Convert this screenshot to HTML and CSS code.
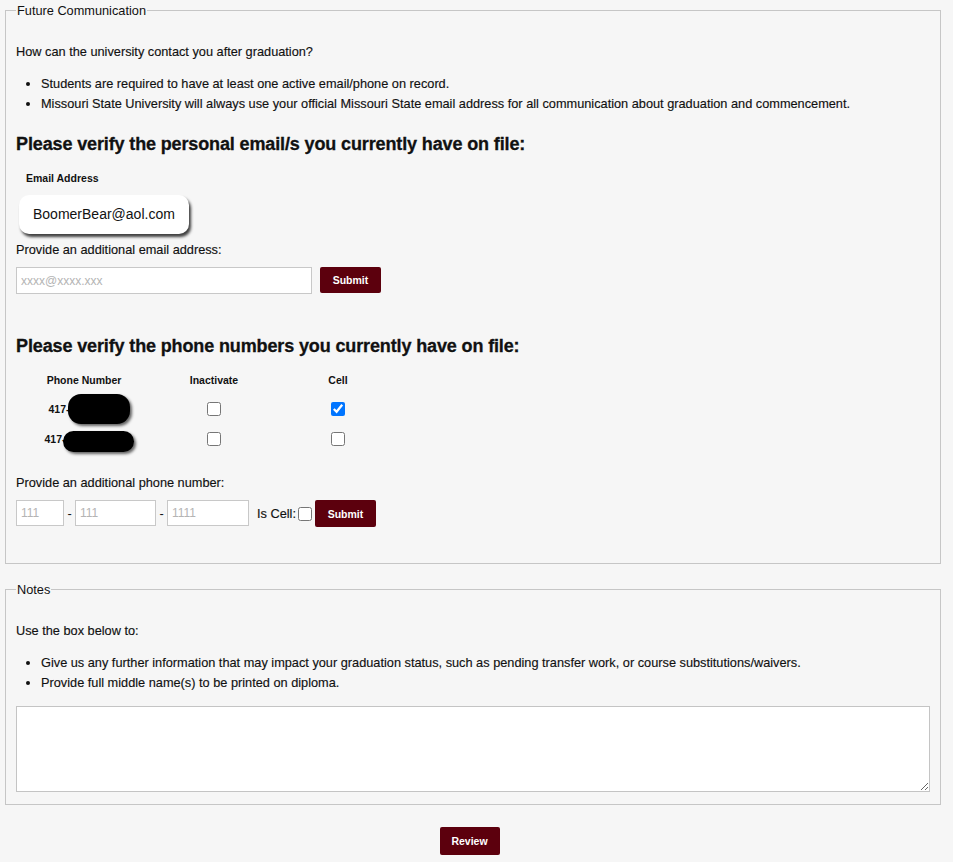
FILE: index.html
```html
<!DOCTYPE html>
<html lang="en">
<head>
<meta charset="utf-8">
<title>Future Communication</title>
<link rel="stylesheet" href="styles.css">
</head>
<body>
<div class="page">
  <fieldset class="box box-comm">
    <legend>Future Communication</legend>
    <p class="intro">How can the university contact you after graduation?</p>
    <ul class="bullets">
      <li>Students are required to have at least one active email/phone on record.</li>
      <li>Missouri State University will always use your official Missouri State email address for all communication about graduation and commencement.</li>
    </ul>

    <h2 class="section-title">Please verify the personal email/s you currently have on file:</h2>
    <div class="col-label">Email Address</div>
    <div class="email-pill">BoomerBear@aol.com</div>

    <label class="field-label" for="newEmail">Provide an additional email address:</label>
    <div class="inline-form">
      <input id="newEmail" class="text-input email-input" type="text" placeholder="xxxx@xxxx.xxx">
      <button class="btn btn-submit" type="button">Submit</button>
    </div>

    <h2 class="section-title phone-title">Please verify the phone numbers you currently have on file:</h2>
    <div class="phone-table">
      <div class="th">Phone Number</div>
      <div class="th">Inactivate</div>
      <div class="th">Cell</div>

      <div class="td td-phone"><span class="num">417-</span><span class="redact redact-1"></span></div>
      <div class="td"><input class="check" type="checkbox"></div>
      <div class="td"><input class="check" type="checkbox" checked></div>

      <div class="td td-phone"><span class="num">417-</span><span class="redact redact-2"></span></div>
      <div class="td"><input class="check" type="checkbox"></div>
      <div class="td"><input class="check" type="checkbox"></div>
    </div>

    <label class="field-label phone-label" for="area">Provide an additional phone number:</label>
    <div class="phone-form">
      <input id="area" class="text-input ph-area" type="text" placeholder="111">
      <span class="dash">-</span>
      <input class="text-input ph-mid" type="text" placeholder="111">
      <span class="dash">-</span>
      <input class="text-input ph-last" type="text" placeholder="1111">
      <span class="is-cell">Is Cell:</span>
      <input class="check cell-check" type="checkbox">
      <button class="btn btn-submit btn-phone" type="button">Submit</button>
    </div>
  </fieldset>

  <fieldset class="box box-notes">
    <legend>Notes</legend>
    <p class="intro">Use the box below to:</p>
    <ul class="bullets">
      <li>Give us any further information that may impact your graduation status, such as pending transfer work, or course substitutions/waivers.</li>
      <li>Provide full middle name(s) to be printed on diploma.</li>
    </ul>
    <textarea class="notes-area"></textarea>
  </fieldset>

  <div class="actions">
    <button class="btn btn-review" type="button">Review</button>
  </div>
</div>
</body>
</html>
```

FILE: styles.css
```css
html, body {
  margin: 0;
  padding: 0;
  background: #f6f6f6;
}

body {
  font-family: "Liberation Sans", Arial, sans-serif;
  font-size: 12.75px;
  color: #111;
}

.page {
  padding: 0 0 0 5px;
  width: 936px;
}

.box {
  box-sizing: border-box;
  width: 936px;
  margin: 3px 0 0;
  padding: 0 10px 36px;
  border: 1px solid #c6c6c6;
  min-width: 0;
}

.box legend {
  padding: 0 1px;
  font-size: 12.75px;
  line-height: 15px;
  color: #111;
}

.box-notes {
  margin-top: 18px;
  padding-bottom: 12px;
}

.intro {
  margin: 26px 0 0;
  line-height: 15px;
  -webkit-text-stroke: 0.15px #111;
}

.bullets {
  margin: 15px 0 0;
  padding-left: 25px;
  -webkit-text-stroke: 0.15px #111;
}

.bullets li {
  line-height: 20px;
}

.section-title {
  margin: 19px 0 0;
  font-size: 18px;
  line-height: 22px;
  font-weight: bold;
  letter-spacing: -0.13px;
  -webkit-text-stroke: 0.3px #111;
  color: #111;
}

.phone-title {
  margin-top: 41px;
}

.col-label {
  margin-top: 17px;
  padding-left: 10px;
  font-size: 10.5px;
  line-height: 13px;
  font-weight: bold;
}

.email-pill {
  box-sizing: border-box;
  width: 170px;
  height: 39px;
  margin: 10px 0 0 3px;
  padding-left: 14px;
  line-height: 39px;
  font-size: 14px;
  color: #111;
  background: #fff;
  border-radius: 10px;
  box-shadow: 2px 3px 3px rgba(0, 0, 0, 0.75);
}

.field-label {
  display: block;
  margin-top: 8px;
  line-height: 15px;
  -webkit-text-stroke: 0.15px #111;
}

.phone-label {
  margin-top: 21px;
}

.inline-form {
  display: flex;
  align-items: flex-start;
  gap: 8px;
  margin-top: 10px;
}

.text-input {
  box-sizing: border-box;
  height: 27px;
  margin: 0;
  padding: 0 4px;
  border: 1px solid #c8c8c8;
  border-radius: 0;
  background: #fff;
  font-family: "Liberation Sans", Arial, sans-serif;
  font-size: 12px;
  color: #111;
  outline: none;
}

.text-input::placeholder {
  color: #b4b4b4;
}

.email-input {
  width: 296px;
}

.btn {
  box-sizing: border-box;
  margin: 0;
  padding: 0;
  border: none;
  border-radius: 2px;
  background: #5c000d;
  color: #fff;
  font-family: "Liberation Sans", Arial, sans-serif;
  font-size: 10.5px;
  font-weight: bold;
  cursor: pointer;
}

.btn-submit {
  width: 61px;
  height: 26px;
}

.phone-table {
  display: grid;
  grid-template-columns: 136px 124px 124px;
  grid-template-rows: 20px 30px 30px;
  margin-top: 17px;
}

.th {
  font-size: 10.5px;
  line-height: 13px;
  font-weight: bold;
  text-align: center;
}

.td {
  display: flex;
  align-items: center;
  justify-content: center;
}

.td-phone {
  padding-left: 10px;
  font-size: 10.5px;
  font-weight: bold;
}

.num {
  line-height: 13px;
}

.redact {
  display: inline-block;
  background: #000;
  box-shadow: 2px 2px 3px rgba(0, 0, 0, 0.6);
  filter: blur(0.4px);
}

.redact-1 {
  width: 62px;
  height: 30px;
  margin-left: -2px;
  border-radius: 13px;
}

.redact-2 {
  width: 71px;
  height: 21px;
  margin-left: -3px;
  margin-top: 4px;
  border-radius: 11px;
}

.check {
  width: 14px;
  height: 14px;
  margin: 0;
}

.phone-form {
  display: flex;
  align-items: center;
  margin-top: 10px;
  height: 27px;
}

.phone-form .text-input {
  height: 26px;
  align-self: flex-start;
}

.ph-area {
  width: 48px;
}

.ph-mid {
  width: 81px;
}

.ph-last {
  width: 82px;
}

.dash {
  width: 11px;
  text-align: center;
  line-height: 15px;
}

.is-cell {
  margin-left: 8px;
  line-height: 15px;
  -webkit-text-stroke: 0.15px #111;
}

.cell-check {
  margin-left: 2px;
}

.btn-phone {
  width: 61px;
  height: 27px;
  margin-left: 3px;
}

.notes-area {
  display: block;
  box-sizing: border-box;
  width: 914px;
  height: 86px;
  margin-top: 13px;
  border: 1px solid #c4c4c4;
  border-radius: 0;
  background: #fff;
  outline: none;
}

.actions {
  display: flex;
  justify-content: center;
  padding-right: 7px;
  margin-top: 22px;
}

.btn-review {
  width: 60px;
  height: 28px;
}
```
